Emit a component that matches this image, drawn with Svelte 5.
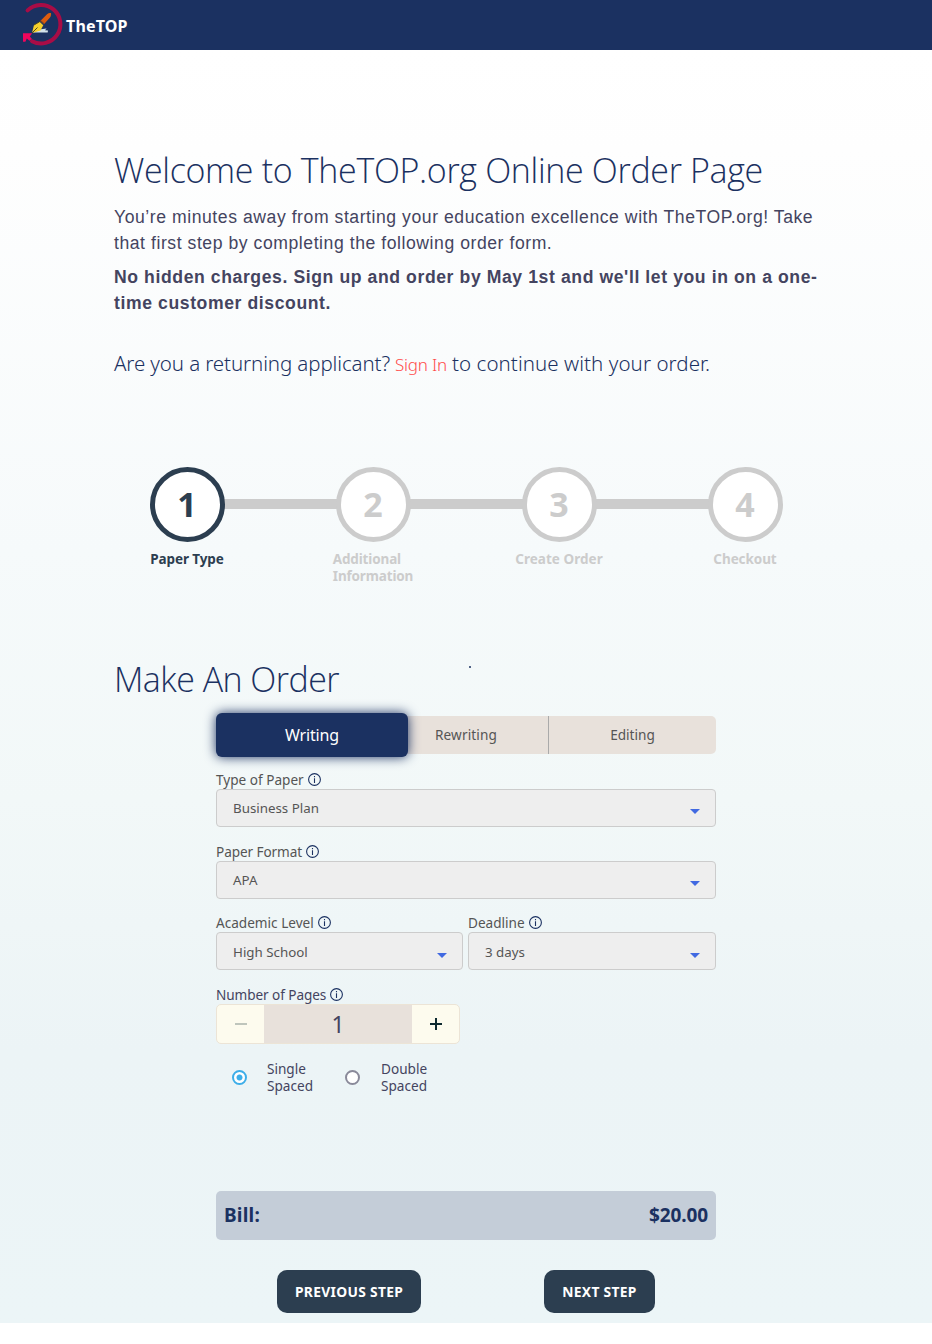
<script>
  const steps = [
    { n: 1, label: 'Paper Type', ls: -0.1, on: true },
    { n: 2, label: 'Additional\nInformation', ls: -0.15 },
    { n: 3, label: 'Create Order', ls: 0.04 },
    { n: 4, label: 'Checkout', ls: -0.08 }
  ];
</script>

{#snippet info()}
  <svg class="info" viewBox="0 0 13 13"><circle cx="6.5" cy="6.5" r="5.9" /><path d="M6.5 5.3v4.6M6.5 3v1.2" /></svg>
{/snippet}

{#snippet select(label, value)}
  <div class="field">
    <div class="label"><span>{label}</span>{@render info()}</div>
    <div class="select"><span>{value}</span><i></i></div>
  </div>
{/snippet}

<header>
  <svg class="logo" viewBox="22 2 42 46">
    <path d="M27.6 10.4A19.3 19.3 0 1 1 32 41.2" fill="none" stroke="#a80c46" stroke-width="4" stroke-linecap="round" />
    <path d="M23 33.300h9.200l-2.400 3.200 2 2.300-2.400 2-2.600-2.200-1.400 3.200h-2.400z" fill="#f0055c" />
    <path d="M33 32.600l8-3.400 5.600-.7-1.600 1.700 3 .2-.3 2z" fill="#d3e2ea" />
    <path d="M32 33l2-8 5.500-3.200 3.800 3.400-2.800 5.300z" fill="#f6d02c" />
    <path d="M32 33l5.500-5.500M34 25l5.500-3.200" fill="none" stroke="#4a4526" stroke-width="1" />
    <path d="M40.500 20.800l6.500-6.500c1-1 3-1.500 4-1.200.3 1.500 0 3.200-1 4.300l-5.800 6.600z" fill="#dc5b0e" />
    <path d="M40.500 20.800l3.700 3.200" stroke="#7b4a25" stroke-width="1.200" />
  </svg>
  <strong>TheTOP</strong>
</header>

<main>
  <h1>Welcome to TheTOP.org Online Order Page</h1>
  <p>You’re minutes away from starting your education excellence with TheTOP.org! Take<br />that first step by completing the following order form.</p>
  <p class="bold">No hidden charges. Sign up and order by May 1st and we'll let you in on a one-<br />time customer discount.</p>
  <h3><span class="ask">Are you a returning applicant?</span><a href="#signin">Sign In</a><span class="go">to continue with your order.</span></h3>

  <div class="steps">
    {#each steps as s}
      <div class="step" class:on={s.on}>
        <b>{s.n}</b>
        <span style="letter-spacing: {s.ls}px">{s.label}</span>
      </div>
    {/each}
  </div>

  <div class="title"><h1>Make An Order</h1><em></em></div>

  <form>
    <div class="tabs">
      <div class="tab active">Writing</div>
      <div class="tab two">Rewriting</div>
      <div class="tab three">Editing</div>
    </div>
    {@render select('Type of Paper', 'Business Plan')}
    <div class="format">{@render select('Paper Format', 'APA')}</div>
    <div class="pair">
      {@render select('Academic Level', 'High School')}
      {@render select('Deadline', '3 days')}
    </div>
    <div class="label dark"><span>Number of Pages</span>{@render info()}</div>
    <div class="counter">
      <div class="btn off"><svg viewBox="0 0 12 12"><path d="M0 6h12" /></svg></div>
      <div class="num">1</div>
      <div class="btn"><svg viewBox="0 0 12 12"><path d="M0 6h12M6 0v12" /></svg></div>
    </div>
    <div class="radios">
      <i class="radio checked"></i><div class="opt">Single<br />Spaced</div>
      <i class="radio second"></i><div class="opt">Double<br />Spaced</div>
    </div>
    <div class="bill"><span class="cap">Bill:</span><span class="sum">$20.00</span></div>
    <div class="actions">
      <button type="button" class="prev">PREVIOUS STEP</button>
      <button type="button" class="next">NEXT STEP</button>
    </div>
  </form>
</main>

<style>
  :global(body) { margin: 0; background: #fff; }
  * { box-sizing: border-box; }
  span, a, h1, p, button { white-space: nowrap; }
  header { height: 50px; background: #1b3161; display: flex; align-items: center; padding-left: 22px; color: #fff; font: 700 16px/22px "Noto Sans", sans-serif; }
  .logo { width: 42px; height: 46px; margin-right: 2px; }
  strong { padding-top: 1px; font-weight: 700; letter-spacing: 0.15px; }
  main { height: 1273px; background: linear-gradient(#fff 0, #fefefe 100px, #f6fafb 500px, #f2f8f8 750px, #ecf4f6 1000px, #ecf5f7); padding: 98px 114px 0; font-family: "Noto Sans", sans-serif; }
  h1 { margin: 0; font: 300 34px/44px "Open Sans", "Noto Sans", sans-serif; letter-spacing: -0.333px; color: #1b3161; }
  p { margin: 12px 0 0; font: 17.6px/26px "Liberation Sans", sans-serif; letter-spacing: 0.555px; color: #444460; }
  p.bold { margin-top: 8px; font-weight: 700; letter-spacing: 0.594px; }
  h3 { margin: 34px 0 0; display: flex; align-items: baseline; font: 300 20.5px/26px "Noto Sans", sans-serif; color: #1b3161; gap: 5px; }
  .ask { letter-spacing: -0.105px; }
  .go { letter-spacing: 0.065px; }
  h3 a { font-size: 17px; letter-spacing: -0.2px; color: #ff4b4b; text-decoration: none; }
  .steps { display: flex; height: 279px; margin: 0 -20px; padding-top: 89px; background: linear-gradient(#ccc, #ccc) 80px 121px / 540px 10px no-repeat; }
  .step { width: 186px; display: flex; flex-direction: column; align-items: center; color: #ccc; font: 700 13.5px/17px "Noto Sans", sans-serif; }
  .step b { width: 75px; height: 75px; flex: none; border: 5px solid #ccc; border-radius: 50%; background: #fff; display: grid; place-items: center; padding-bottom: 1px; font: 700 34px/40px "Noto Sans", sans-serif; margin-bottom: 9px; }
  .step span { white-space: pre; }
  .on { color: #2c3e50; }
  .on b { border-color: #2c3e50; }
  .title { display: flex; }
  .title h1 { letter-spacing: -0.54px; }
  em { width: 2px; height: 2px; border-radius: 1px; background: #1b3161; margin: 9px 0 0 130px; }
  form { width: 500px; margin: 15px 0 0 102px; font-size: 13.6px; line-height: 17px; color: #555; }
  .tabs { height: 38px; display: flex; align-items: center; background: #e8e1db; border-radius: 5px; margin-bottom: 17px; }
  .tab { display: grid; place-items: center; height: 38px; }
  .active { width: 192px; height: 44px; flex: none; background: #1b3161; border-radius: 6px; box-shadow: 0 0 12px #1b3161; color: #fff; font-size: 16px; letter-spacing: -0.156px; }
  .two { width: 141px; border-right: 1px solid #aaa; padding-right: 24px; padding-bottom: 1px; letter-spacing: 0.128px; }
  .three { flex: 1; padding-bottom: 1px; }
  .label { height: 18px; padding-bottom: 1px; display: flex; align-items: center; }
  .info { width: 13px; height: 13px; margin-left: 4px; fill: none; stroke: #1b3161; stroke-width: 1.1; }
  .field { height: 72px; flex: 1; }
  .format .label { letter-spacing: -0.098px; }
  .select { height: 38px; border: 1px solid #ccc; border-radius: 4px; background: #eee; display: flex; align-items: center; justify-content: space-between; padding: 0 15px 0 16px; font-size: 13.33px; letter-spacing: 0; }
  .select i { border: 5px solid transparent; border-top-color: #4169e1; border-bottom: 0; margin-top: 7px; }
  .pair { display: grid; grid-template-columns: 247px 248px; gap: 5px; margin-top: -1px; }
  .pair .select span { padding-top: 2px; }
  .pair .select i { margin-top: 9px; }
  .dark { color: #444460; letter-spacing: -0.08px; }
  .counter { width: 244px; height: 40px; display: flex; border: 1px solid #ece4d6; border-radius: 5px; overflow: hidden; background: #fdfbee; }
  .btn { width: 47px; display: grid; place-items: center; }
  .btn svg { width: 12px; height: 12px; stroke: #0e2a30; stroke-width: 2; }
  .off svg { stroke: #bfc5bc; }
  .num { flex: 1; background: #e8e1db; display: grid; place-items: center; font-size: 23px; color: #444460; }
  .radios { display: flex; align-items: center; margin: 16px 0 0 16px; color: #444460; height: 34px; }
  .radio { width: 15px; height: 15px; border: 2px solid #8a8a9a; border-radius: 50%; background: #fff; }
  .checked { border-color: #3daee9; background: radial-gradient(#3daee9 0 2.6px, #fff 3.4px); }
  .opt { width: 78px; margin-left: 20px; }
  .second + .opt { margin-left: 21px; }
  .bill { margin-top: 97px; height: 49px; border-radius: 5px; background: #c4cdd8; display: flex; align-items: center; justify-content: space-between; padding: 0 8px; font-size: 19px; font-weight: 700; color: #1b3161; }
  .cap { letter-spacing: 0.2px; }
  .sum { letter-spacing: -0.115px; }
  .actions { display: flex; margin: 30px 0 0 61px; gap: 123px; }
  button { height: 43px; border: 0; border-radius: 10px; background: #2c3e50; color: #fff; padding: 0; font: 700 13.8px/17px "Noto Sans", sans-serif; letter-spacing: 0.32px; }
  .prev { width: 144px; }
  .next { width: 111px; }
</style>
